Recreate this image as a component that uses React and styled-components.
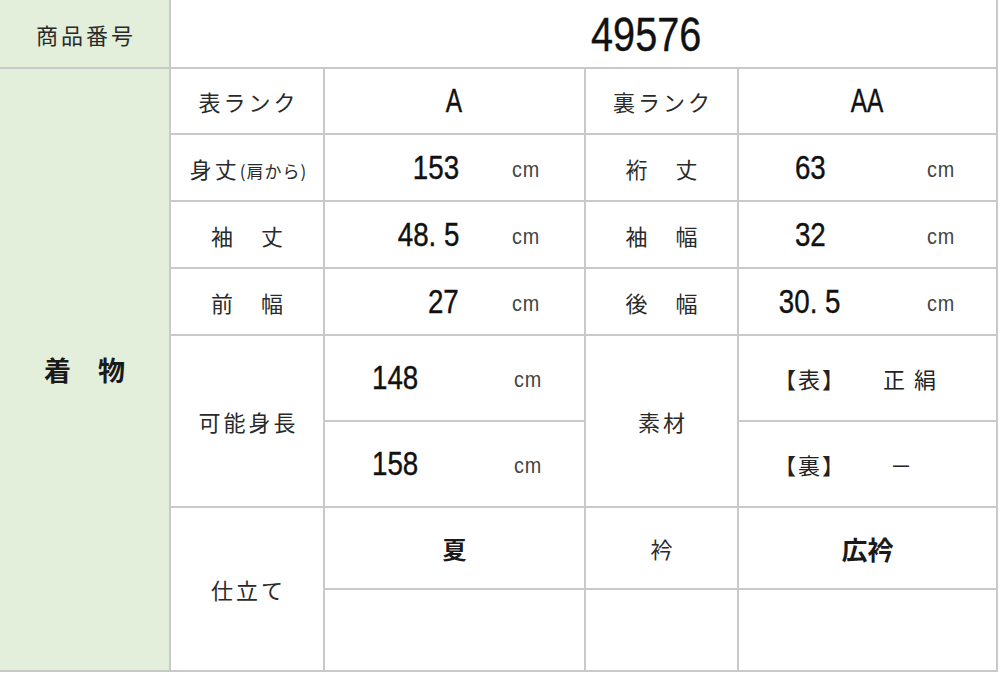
import React from 'react';
import styled, { createGlobalStyle } from 'styled-components';

const Global = createGlobalStyle`
  html, body {
    margin: 0;
    padding: 0;
    background: #fff;
  }
  body {
    font-family: "Noto Sans CJK JP", "Noto Sans", sans-serif;
    color: #222;
  }
`;

const Sheet = styled.div`
  display: grid;
  grid-template-columns: 169px 152px 259px 151px 257px;
  grid-template-rows: 67px 64px 65px 65px 65px 84px 84px 80px 80px;
  gap: 2px;
  padding: 0 2px 2px 0;
  width: max-content;
  background: #c9c9c9;
`;

const Cell = styled.div`
  grid-column: ${p => p.$col};
  grid-row: ${p => p.$row};
  background: ${p => (p.$green ? '#e3efdb' : '#fff')};
  display: flex;
  align-items: center;
  justify-content: ${p => p.$justify || 'center'};
  padding-left: ${p => p.$pl || 0}px;
  min-width: 0;
`;

const Label = styled.span`
  font-size: 22px;
  letter-spacing: 3px;
  white-space: pre;
  color: #2a2a2a;
  margin-right: -3px;
`;

const Small = styled.span`
  font-size: 17px;
  letter-spacing: 1px;
`;

const Strong = styled.span`
  font-size: ${p => p.$size || 24}px;
  font-weight: 700;
  white-space: pre;
  color: #1a1a1a;
`;

const Num = styled.span`
  display: inline-block;
  font-family: "Liberation Sans", Arial, sans-serif;
  font-size: ${p => p.$size || 33}px;
  transform: scaleX(${p => p.$scale || 0.84});
  transform-origin: ${p => p.$origin || 'center'};
  color: #111;
  -webkit-text-stroke: 0.4px #111;
  white-space: pre;
`;

const Unit = styled.span`
  display: inline-block;
  font-family: "Liberation Sans", Arial, sans-serif;
  font-size: 22px;
  letter-spacing: 1px;
  transform: translateY(2px) scaleX(0.9);
  transform-origin: left;
  color: #444;
`;

const Measure = styled.div`
  display: grid;
  grid-template-columns: ${p => p.$numWidth}px auto;
  align-items: center;
  width: 100%;
  padding-left: ${p => p.$offset || 0}px;
`;

const NumBox = styled.div`
  text-align: ${p => p.$align};
`;

const UnitBox = styled.div`
  padding-left: ${p => p.$gap}px;
`;

const SizeA = ({ value }) => (
  <Measure $numWidth={134}>
    <NumBox $align="right"><Num $origin="right">{value}</Num></NumBox>
    <UnitBox $gap={53}><Unit>cm</Unit></UnitBox>
  </Measure>
);

const SizeB = ({ value }) => (
  <Measure $numWidth={142}>
    <NumBox $align="center"><Num>{value}</Num></NumBox>
    <UnitBox $gap={46}><Unit>cm</Unit></UnitBox>
  </Measure>
);

const Height = ({ value }) => (
  <Measure $numWidth={141} $offset={47}>
    <NumBox $align="left"><Num $origin="left">{value}</Num></NumBox>
    <UnitBox $gap={1}><Unit>cm</Unit></UnitBox>
  </Measure>
);

const Material = styled.span`
  font-size: 22px;
  letter-spacing: 2px;
  white-space: pre;
  color: #222;
`;

export default function App() {
  return (
    <>
      <Global />
      <Sheet>
        <Cell $col="1" $row="1" $green><Label>商品番号</Label></Cell>
        <Cell $col="2 / 6" $row="1" $justify="flex-start" $pl={420}>
          <Num $size={49} $scale={0.81} $origin="left">49576</Num>
        </Cell>

        <Cell $col="1" $row="2 / 10" $green><Strong $size={27}>着　物</Strong></Cell>

        <Cell $col="2" $row="2"><Label>表ランク</Label></Cell>
        <Cell $col="3" $row="2"><Num $scale={0.74}>A</Num></Cell>
        <Cell $col="4" $row="2"><Label>裏ランク</Label></Cell>
        <Cell $col="5" $row="2"><Num $scale={0.74}>AA</Num></Cell>

        <Cell $col="2" $row="3"><Label>身丈<Small>(肩から)</Small></Label></Cell>
        <Cell $col="3" $row="3"><SizeA value="153" /></Cell>
        <Cell $col="4" $row="3"><Label>裄　丈</Label></Cell>
        <Cell $col="5" $row="3"><SizeB value="63" /></Cell>

        <Cell $col="2" $row="4"><Label>袖　丈</Label></Cell>
        <Cell $col="3" $row="4"><SizeA value="48. 5" /></Cell>
        <Cell $col="4" $row="4"><Label>袖　幅</Label></Cell>
        <Cell $col="5" $row="4"><SizeB value="32" /></Cell>

        <Cell $col="2" $row="5"><Label>前　幅</Label></Cell>
        <Cell $col="3" $row="5"><SizeA value="27" /></Cell>
        <Cell $col="4" $row="5"><Label>後　幅</Label></Cell>
        <Cell $col="5" $row="5"><SizeB value="30. 5" /></Cell>

        <Cell $col="2" $row="6 / 8"><Label>可能身長</Label></Cell>
        <Cell $col="3" $row="6"><Height value="148" /></Cell>
        <Cell $col="3" $row="7"><Height value="158" /></Cell>
        <Cell $col="4" $row="6 / 8"><Label>素材</Label></Cell>
        <Cell $col="5" $row="6" $justify="flex-start" $pl={35}><Material>【表】　　正 絹</Material></Cell>
        <Cell $col="5" $row="7" $justify="flex-start" $pl={35}><Material>【裏】　　 －</Material></Cell>

        <Cell $col="2" $row="8 / 10"><Label>仕立て</Label></Cell>
        <Cell $col="3" $row="8"><Strong>夏</Strong></Cell>
        <Cell $col="3" $row="9" />
        <Cell $col="4" $row="8"><Label>衿</Label></Cell>
        <Cell $col="4" $row="9" />
        <Cell $col="5" $row="8"><Strong $size={26}>広衿</Strong></Cell>
        <Cell $col="5" $row="9" />
      </Sheet>
    </>
  );
}
